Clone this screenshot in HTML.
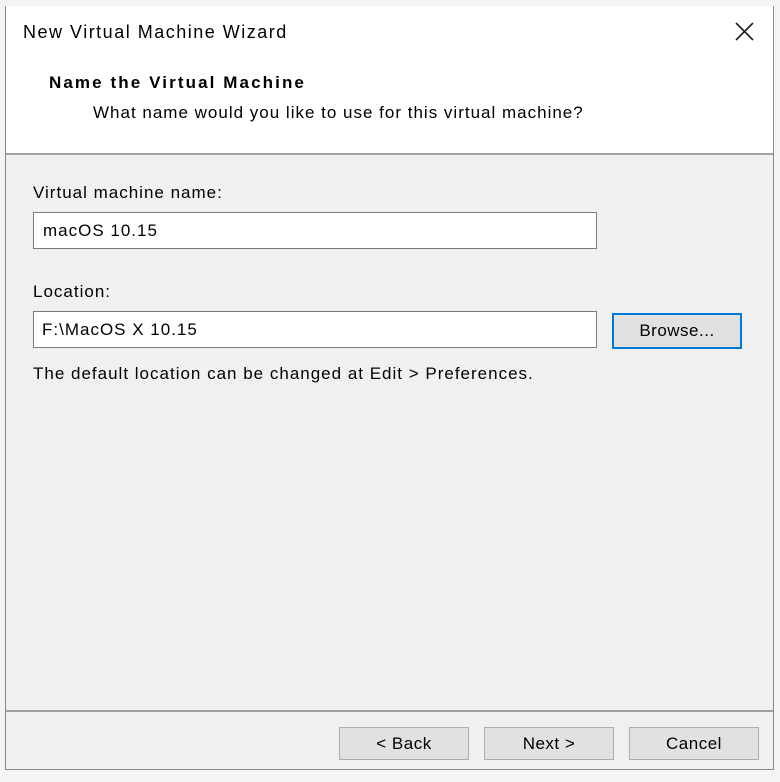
<!DOCTYPE html>
<html><head><style>
body{margin:0;width:780px;height:782px;background:#f4f4f4;position:relative;overflow:hidden;font-family:"Liberation Sans",sans-serif;color:#000}
.win{position:absolute;left:5px;top:6px;width:767px;height:763px;border:1px solid #8a8a8a;border-top:none;background:#f0f0f0}
.hdr{position:absolute;left:0;top:0;width:767px;height:147px;background:#fff;border-bottom:2px solid #a0a0a0}
.t{position:absolute;font-size:17px;white-space:nowrap;letter-spacing:1px}
.inp{position:absolute;background:#fff;border:1px solid #7a7a7a;height:37px;box-sizing:border-box}
.btn{position:absolute;top:721px;width:130px;height:33px;box-sizing:border-box;border:1px solid #adadad;background:#e1e1e1;font-size:17px;text-align:center;line-height:31px;letter-spacing:0.5px}
</style></head><body>
<div class="win">
<div class="hdr"></div>
<div class="t" style="left:17px;top:16px;font-size:18px;letter-spacing:1.5px">New Virtual Machine Wizard</div>
<svg style="position:absolute;left:729px;top:16px" width="19" height="19"><path d="M1 1L18 18M18 1L1 18" stroke="#222" stroke-width="1.6"/></svg>
<div class="t" style="left:43px;top:67px;font-weight:bold;letter-spacing:2.1px">Name the Virtual Machine</div>
<div class="t" style="left:87px;top:97px">What name would you like to use for this virtual machine?</div>
<div class="t" style="left:27px;top:177px">Virtual machine name:</div>
<div class="inp" style="left:27px;top:206px;width:564px"><span class="t" style="left:9px;top:8px">macOS 10.15</span></div>
<div class="t" style="left:27px;top:276px">Location:</div>
<div class="inp" style="left:27px;top:305px;width:564px"><span class="t" style="left:8px;top:8px">F:\MacOS X 10.15</span></div>
<div class="btn" style="left:606px;top:307px;height:36px;border:2px solid #0078d7;line-height:32px">Browse...</div>
<div class="t" style="left:27px;top:358px">The default location can be changed at Edit &gt; Preferences.</div>
<div style="position:absolute;left:0;top:704px;width:767px;height:2px;background:#a0a0a0"></div>
<div class="btn" style="left:333px">&lt; Back</div>
<div class="btn" style="left:478px">Next &gt;</div>
<div class="btn" style="left:623px">Cancel</div>
</div>
</body></html>
